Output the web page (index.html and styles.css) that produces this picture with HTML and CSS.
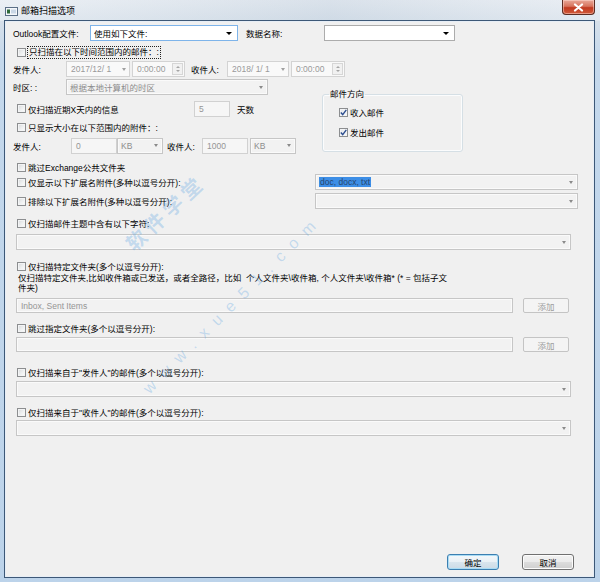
FILE: index.html
```html
<!DOCTYPE html>
<html lang="zh-CN">
<head>
<meta charset="utf-8">
<title>邮箱扫描选项</title>
<link rel="stylesheet" href="styles.css">
</head>
<body>
<div class="window">
  <div class="titlebar">
    <svg class="app-icon" width="13" height="9" viewBox="0 0 13 9"><rect x="0.5" y="0.5" width="12" height="8" fill="#f4f7fb" stroke="#5b6f86"/><rect x="2" y="2.5" width="3" height="4" fill="#2f6a3a"/><rect x="6" y="2.5" width="5" height="4" fill="#c9d7e6"/></svg>
    <span class="title">邮箱扫描选项</span>
    <button class="close" type="button"><svg width="11" height="9" viewBox="0 0 11 9"><path d="M2 1.5 L9 7.5 M9 1.5 L2 7.5" stroke="#fff" stroke-width="2.2" stroke-linecap="round"/></svg></button>
  </div>
  <div class="frame">
    <div class="client">
      <span class="wm wm-cn">软件学堂</span>
      <span class="wm wm-url">www.xue51.com</span>

      <div class="row r-first">
        <span class="lbl w77">Outlook配置文件:</span>
        <div class="combo focus w148"><span class="val">使用如下文件:</span><span class="arrow"></span></div>
        <span class="lbl w78 ml8">数据名称:</span>
        <div class="combo w131"><span class="val"></span><span class="arrow"></span></div>
      </div>

      <div class="row chk mt3">
        <span class="cb"></span>
        <span class="txt focusrect">只扫描在以下时间范围内的邮件：:</span>
      </div>

      <div class="row mt1">
        <span class="lbl w53">发件人:</span>
        <div class="dtp w64"><span class="val">2017/12/ 1</span><span class="arrow"></span></div>
        <div class="dtp time w53 ml2"><span class="val">0:00:00</span><span class="spin"><i class="up"></i><i class="dn"></i></span></div>
        <span class="lbl w36 ml6">收件人:</span>
        <div class="dtp w62"><span class="val">2018/ 1/ 1</span><span class="arrow"></span></div>
        <div class="dtp time w54 ml2"><span class="val">0:00:00</span><span class="spin"><i class="up"></i><i class="dn"></i></span></div>
      </div>

      <div class="section mt2">
        <div class="leftcol">
          <div class="row">
            <span class="lbl w53">时区: :</span>
            <div class="combo dis w202 h15"><span class="val">根据本地计算机的时区</span><span class="arrow"></span></div>
          </div>
          <div class="row chk mt5 h17">
            <span class="cb"></span>
            <span class="txt w166">仅扫描近期X天内的信息</span>
            <div class="input dis w36"><span class="val">5</span></div>
            <span class="lbl ml7">天数</span>
          </div>
          <div class="row chk mt2">
            <span class="cb"></span>
            <span class="txt">只显示大小在以下范围内的附件：:</span>
          </div>
          <div class="row mt2 h17">
            <span class="lbl w58">发件人:</span>
            <div class="input dis w46"><span class="val">0</span></div>
            <div class="combo dis w46"><span class="val">KB</span><span class="arrow"></span></div>
            <span class="lbl w35 ml4">收件人:</span>
            <div class="input dis w46"><span class="val">1000</span></div>
            <div class="combo dis w46 ml2"><span class="val">KB</span><span class="arrow"></span></div>
          </div>
        </div>
        <fieldset class="group">
          <legend>邮件方向</legend>
          <div class="row chk gitem"><span class="cb on"><svg width="7" height="7" viewBox="0 0 7 7"><path d="M0.8 3.6 L2.7 5.6 L6.3 0.9" fill="none" stroke="#2c4d8e" stroke-width="1.4"/></svg></span><span class="txt">收入邮件</span></div>
          <div class="row chk gitem"><span class="cb on"><svg width="7" height="7" viewBox="0 0 7 7"><path d="M0.8 3.6 L2.7 5.6 L6.3 0.9" fill="none" stroke="#2c4d8e" stroke-width="1.4"/></svg></span><span class="txt">发出邮件</span></div>
        </fieldset>
      </div>

      <div class="row chk mt6 h14">
        <span class="cb"></span>
        <span class="txt">跳过Exchange公共文件夹</span>
      </div>

      <div class="row chk">
        <span class="cb"></span>
        <span class="txt">仅显示以下扩展名附件(多种以逗号分开):</span>
        <div class="combo dis w263 ext"><span class="val"><span class="sel">doc, docx, txt</span></span><span class="arrow"></span></div>
      </div>

      <div class="row chk mt3">
        <span class="cb"></span>
        <span class="txt">排除以下扩展名附件(多种以逗号分开):</span>
        <div class="combo dis w263 ext"><span class="val"></span><span class="arrow"></span></div>
      </div>

      <div class="row chk mt6">
        <span class="cb"></span>
        <span class="txt">仅扫描邮件主题中含有以下字符:</span>
      </div>
      <div class="combo dis wide h15 mt3"><span class="val"></span><span class="arrow"></span></div>

      <div class="row chk mt9 h14">
        <span class="cb"></span>
        <span class="txt">仅扫描特定文件夹(多个以逗号分开):</span>
      </div>
      <p class="desc">仅扫描特定文件夹,比如收件箱或已发送，或者全路径，比如&nbsp; 个人文件夹\收件箱, 个人文件夹\收件箱* (* = 包括子文<br>件夹)</p>
      <div class="row inrow mt5 h15">
        <div class="input dis folder"><span class="val">Inbox, Sent Items</span></div>
        <button class="btn dis" type="button">添加</button>
      </div>

      <div class="row chk mt8 h14">
        <span class="cb"></span>
        <span class="txt">跳过指定文件夹(多个以逗号分开):</span>
      </div>
      <div class="row inrow mt2 h15">
        <div class="input dis folder"><span class="val"></span></div>
        <button class="btn dis" type="button">添加</button>
      </div>

      <div class="row chk mt13 h14">
        <span class="cb"></span>
        <span class="txt">仅扫描来自于"发件人"的邮件(多个以逗号分开):</span>
      </div>
      <div class="combo dis wide h15 mt2"><span class="val"></span><span class="arrow"></span></div>

      <div class="row chk mt8 h14">
        <span class="cb"></span>
        <span class="txt">仅扫描来自于"收件人"的邮件(多个以逗号分开):</span>
      </div>
      <div class="combo dis wide h15 mt1"><span class="val"></span><span class="arrow"></span></div>

      <div class="footer">
        <button class="btn ok" type="button">确定</button>
        <button class="btn cancel" type="button">取消</button>
      </div>
    </div>
  </div>
</div>
</body>
</html>
```

FILE: styles.css
```css
* { box-sizing: border-box; margin: 0; padding: 0; }

body {
  margin: 0;
  width: 600px;
  height: 582px;
  overflow: hidden;
  font-family: "Liberation Sans", "Noto Sans CJK SC", sans-serif;
  font-size: 8.5px;
  color: #000;
  background: #fff;
}

.window {
  width: 600px;
  height: 582px;
  display: flex;
  flex-direction: column;
  background: linear-gradient(180deg, #e3e9f0 0, #d6e0ea 21px, #c4d8ec 60px, #bcd3ea 100%);
}

.titlebar {
  height: 21px;
  flex: none;
  display: flex;
  align-items: flex-start;
  padding-left: 5px;
  background: linear-gradient(90deg, rgba(255,255,255,0.3), rgba(170,188,206,0.16) 55%, rgba(255,255,255,0.25));
}

.app-icon { margin-top: 7px; flex: none; }

.title {
  margin-left: 3px;
  margin-top: 6px;
  line-height: 10px;
  font-size: 9px;
  color: #000;
}

.close {
  margin-left: auto;
  margin-right: 5px;
  width: 33px;
  height: 15px;
  border: 1px solid #5b2c22;
  border-top: none;
  border-radius: 0 0 4px 4px;
  background: linear-gradient(180deg, #e9a898 0, #d7735c 45%, #c1391f 55%, #d05a3a 100%);
  box-shadow: inset 0 0 0 1px rgba(255,220,210,0.5);
  display: flex;
  align-items: center;
  justify-content: center;
}

.frame {
  flex: 1;
  min-height: 0;
  display: flex;
  padding: 0 6px 5px 5px;
}

.client {
  flex: 1;
  position: relative;
  display: flex;
  flex-direction: column;
  background: #f0f0f0;
  border: 1px solid #e7eef6;
  box-shadow: 0 0 0 1px #3d5877;
  padding: 3px 15px 6px 7px;
  overflow: hidden;
}

/* watermark */
.wm {
  position: absolute;
  white-space: nowrap;
  color: rgba(96, 166, 226, 0.33);
  font-family: "Noto Sans CJK SC", "Liberation Sans", sans-serif;
  transform: translate(-50%, -50%) rotate(-43deg);
  pointer-events: none;
}
.wm-cn { left: 159px; top: 190px; font-size: 20px; letter-spacing: 5px; font-weight: bold; }
.wm-url { left: 227px; top: 282px; font-size: 16px; letter-spacing: 10px; transform: translate(-50%, -50%) rotate(-45deg); font-family: "Liberation Sans", sans-serif; }

/* rows */
.row { display: flex; align-items: center; height: 16px; flex: none; }
.row.chk { padding-left: 4px; }
.h14 { height: 14px; }
.h15 { height: 15px; }
.h17 { height: 17px; }

.mt1 { margin-top: 1px; }
.mt2 { margin-top: 2px; }
.mt3 { margin-top: 3px; }
.mt5 { margin-top: 5px; }
.mt6 { margin-top: 6px; }
.mt8 { margin-top: 8px; }
.mt9 { margin-top: 9px; }
.mt13 { margin-top: 13px; }
.ml2 { margin-left: 2px; }
.ml4 { margin-left: 4px; }
.ml6 { margin-left: 6px; }
.ml7 { margin-left: 7px; }
.ml8 { margin-left: 8px; }

.lbl { flex: none; white-space: nowrap; color: #000; }
.w35 { width: 35px; }
.w36 { width: 36px; }
.w46 { width: 46px; }
.w53 { width: 53px; }
.w54 { width: 54px; }
.w58 { width: 58px; }
.w62 { width: 62px; }
.w64 { width: 64px; }
.w77 { width: 77px; }
.w78 { width: 78px; }
.w131 { width: 131px; }
.w148 { width: 148px; }
.w166 { width: 166px; }
.w202 { width: 202px; }
.w263 { width: 263px; }

/* checkbox */
.cb {
  flex: none;
  width: 9px;
  height: 9px;
  border: 1px solid #8c8e90;
  background: linear-gradient(135deg, #d6d8da 0, #eef0f1 55%, #fdfdfd 100%);
  box-shadow: inset 0 0 0 1px #f3f4f5;
  display: flex;
  align-items: center;
  justify-content: center;
}
.cb.on { background: linear-gradient(135deg, #e3e6ea 0, #f7f8f9 100%); }
.txt { margin-left: 2px; white-space: nowrap; flex: none; color: #000; }
.focusrect { outline: 1px dotted #222; outline-offset: 0; padding: 0 1px; line-height: 11px; }

/* combo boxes */
.combo {
  flex: none;
  display: flex;
  align-items: center;
  height: 16px;
  border: 1px solid #acacac;
  background: #fff;
  padding-left: 3px;
}
.combo .val { flex: 1; white-space: nowrap; overflow: hidden; color: #000; }
.combo .arrow {
  flex: none;
  width: 0;
  height: 0;
  border-left: 3px solid transparent;
  border-right: 3px solid transparent;
  border-top: 3px solid #000;
  margin: 0 5px 0 4px;
}
.combo.focus { border-color: #7eb4ea; }
.combo.dis {
  background: #f2f2f2;
  border-color: #c6c6c6;
  box-shadow: inset 0 0 0 1px #fafafa;
}
.combo.dis .val { color: #8d8d8d; }
.combo.dis .arrow {
  border-left-width: 2.5px;
  border-right-width: 2.5px;
  border-top: 3px solid #8a8a8a;
  margin-right: 4px;
}
.combo.ext { margin-left: auto; }
.combo.wide { width: 555px; margin-left: 3px; }
.sel { background: #3d8ee6; color: #27466e; padding: 0 1px; }

/* date/time pickers */
.dtp {
  flex: none;
  display: flex;
  align-items: center;
  height: 16px;
  border: 1px solid #d3d3d3;
  background: #f9f9f9;
  padding-left: 4px;
}
.dtp .val { flex: 1; color: #9a9a9a; white-space: nowrap; }
.dtp .arrow {
  flex: none;
  width: 0;
  height: 0;
  border-left: 2.5px solid transparent;
  border-right: 2.5px solid transparent;
  border-top: 3px solid #a0a0a0;
  margin-right: 3px;
}
.spin {
  flex: none;
  width: 11px;
  height: 12px;
  margin-right: 1px;
  border: 1px solid #d6d6d6;
  background: #f1f1f1;
  display: flex;
  flex-direction: column;
  align-items: center;
  justify-content: space-evenly;
}
.spin i { display: block; width: 0; height: 0; border-left: 2px solid transparent; border-right: 2px solid transparent; }
.spin .up { border-bottom: 2px solid #a5a5a5; }
.spin .dn { border-top: 2px solid #a5a5a5; }

/* inputs */
.input {
  flex: none;
  display: flex;
  align-items: center;
  height: 16px;
  border: 1px solid #d1d1d1;
  background: #f6f6f6;
  padding-left: 4px;
}
.input .val { color: #959595; white-space: nowrap; }
.input.folder {
  width: 497px;
  height: 15px;
  margin-left: 3px;
  border-color: #c6c6c6;
  background: #f2f2f2;
  box-shadow: inset 0 0 0 1px #fafafa;
}

/* group box */
.section { display: flex; align-items: flex-start; flex: none; }
.leftcol { width: 302px; flex: none; display: flex; flex-direction: column; }
.group {
  margin-left: 7px;
  margin-top: 9px;
  width: 141px;
  height: 64px;
  border: 1px solid #d5dfe5;
  border-radius: 3px;
  padding: 0 0 0 12px;
  box-shadow: inset 0 0 0 1px #fbfcfd;
}
.group legend {
  margin-left: -6px;
  padding: 0 1px;
  line-height: 12px;
  color: #000;
}
.gitem { padding-left: 0; margin-top: 4px; }

.desc {
  flex: none;
  padding-left: 5px;
  line-height: 10px;
  color: #000;
  white-space: nowrap;
}

/* buttons */
.inrow { align-items: stretch; }
.btn {
  font: inherit;
  flex: none;
  display: flex;
  align-items: center;
  justify-content: center;
  border-radius: 2px;
}
.btn.dis {
  width: 46px;
  margin-left: 10px;
  border: 1px solid #c4c4c4;
  background: #f4f4f4;
  color: #9d9d9d;
}

.footer {
  margin-top: auto;
  margin-right: 4px;
  height: 16px;
  flex: none;
  display: flex;
  justify-content: flex-end;
  gap: 23px;
}
.btn.ok, .btn.cancel {
  width: 52px;
  height: 16px;
  border-radius: 3px;
  color: #000;
}
.btn.ok {
  border: 1px solid #3c7fb1;
  background: linear-gradient(180deg, #f4f8fb 0, #e9f0f5 50%, #d9e5ee 50%, #cddbe6 100%);
  box-shadow: inset 0 0 0 1px #a9dcf5;
}
.btn.cancel {
  border: 1px solid #707070;
  background: linear-gradient(180deg, #f2f2f2 0, #ebebeb 50%, #dddddd 50%, #cfcfcf 100%);
  box-shadow: inset 0 0 0 1px #fcfcfc;
}
```
